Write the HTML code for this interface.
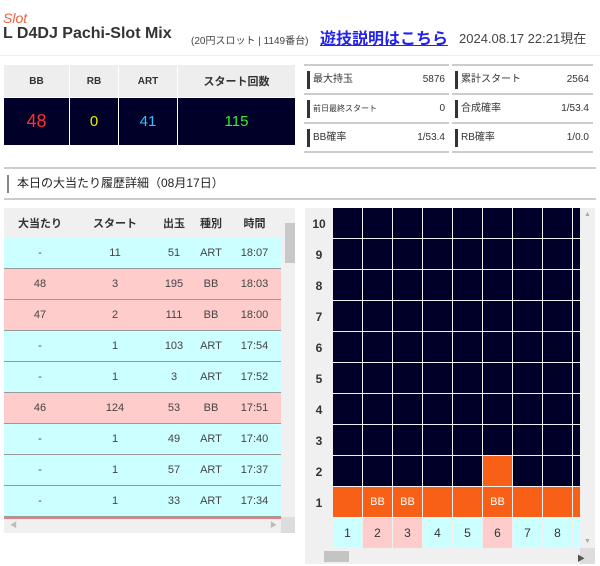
<!DOCTYPE html><html><head><meta charset="utf-8"><style>
*{margin:0;padding:0;box-sizing:border-box}
body{width:600px;height:566px;background:#fff;font-family:"Liberation Sans","Noto Sans CJK JP",sans-serif;color:#333;position:relative;overflow:hidden}
.a{position:absolute}
.c{display:flex;align-items:center;justify-content:center}
.r{height:29px;border-bottom:2px solid #ccc;position:relative;font-size:10px;line-height:12px}
.r span{position:absolute;top:8px;line-height:12px}
</style></head><body>
<div class="a" style="left:3px;top:10px;font-size:14px;font-style:italic;color:#f06040">Slot</div>
<div class="a" style="left:3px;top:25px;font-size:16px;font-weight:bold;color:#333;white-space:nowrap">L D4DJ Pachi-Slot Mix</div>
<div class="a" style="left:191px;top:32px;font-size:10px;color:#444;white-space:nowrap">(20円スロット | 1149番台)</div>
<div class="a" style="left:320px;top:25px;font-size:16px;font-weight:bold;color:#2222ee;text-decoration:underline;white-space:nowrap">遊技説明はこちら</div>
<div class="a" style="left:459px;top:28px;font-size:13px;color:#444;white-space:nowrap">2024.08.17 22:21現在</div>
<div class="a" style="left:0;top:55px;width:600px;height:1px;background:#eee"></div>

<div class="a" style="left:4px;top:65px;width:291px;height:80px;background:#fff">
<div class="a c" style="left:0;top:0;width:65px;height:32px;background:#eee;font-size:10px;font-weight:bold">BB</div>
<div class="a c" style="left:66px;top:0;width:48px;height:32px;background:#eee;font-size:10px;font-weight:bold">RB</div>
<div class="a c" style="left:115px;top:0;width:58px;height:32px;background:#eee;font-size:10px;font-weight:bold">ART</div>
<div class="a c" style="left:174px;top:0;width:117px;height:32px;background:#eee;font-size:11px;font-weight:bold">スタート回数</div>
<div class="a c" style="left:0;top:33px;width:65px;height:47px;background:#000028;font-size:18px;color:#ff3030">48</div>
<div class="a c" style="left:66px;top:33px;width:48px;height:47px;background:#000028;font-size:15px;color:#eeee00">0</div>
<div class="a c" style="left:115px;top:33px;width:58px;height:47px;background:#000028;font-size:15px;color:#30c0ff">41</div>
<div class="a c" style="left:174px;top:33px;width:117px;height:47px;background:#000028;font-size:15px;color:#30f030">115</div>
</div>

<div class="a" style="left:304px;top:64px;width:145px;height:110px;border-top:2px solid #ccc">
<div class="r"><div class="a" style="left:3px;top:5px;width:3px;height:18px;background:#333"></div><span style="left:9px">最大持玉</span><span style="right:4px">5876</span></div>
<div class="r"><div class="a" style="left:3px;top:5px;width:3px;height:18px;background:#333"></div><span style="left:9px;font-size:8px">前日最終スタート</span><span style="right:4px">0</span></div>
<div class="r"><div class="a" style="left:3px;top:5px;width:3px;height:18px;background:#333"></div><span style="left:9px">BB確率</span><span style="right:4px">1/53.4</span></div>
</div>
<div class="a" style="left:452px;top:64px;width:141px;height:110px;border-top:2px solid #ccc">
<div class="r"><div class="a" style="left:3px;top:5px;width:3px;height:18px;background:#333"></div><span style="left:9px">累計スタート</span><span style="right:4px">2564</span></div>
<div class="r"><div class="a" style="left:3px;top:5px;width:3px;height:18px;background:#333"></div><span style="left:9px">合成確率</span><span style="right:4px">1/53.4</span></div>
<div class="r"><div class="a" style="left:3px;top:5px;width:3px;height:18px;background:#333"></div><span style="left:9px">RB確率</span><span style="right:4px">1/0.0</span></div>
</div>

<div class="a" style="left:4px;top:167px;width:592px;height:33px;border-top:2px solid #ccc;border-bottom:2px solid #ccc">
<div class="a" style="left:3px;top:6px;width:2px;height:18px;background:#888"></div>
<span class="a" style="left:13px;top:7px;font-size:12px;line-height:14px;color:#222">本日の大当たり履歴詳細（08月17日）</span></div>

<div class="a" style="left:4px;top:208px;width:291px;height:325px;background:#f0f0f0;overflow:hidden;font-size:11px">
<div style="position:absolute;left:0;top:0;width:277px">
<div style="display:flex;height:30px;align-items:center;font-weight:bold;color:#333;font-size:11px"><span style="width:72px;text-align:center">大当たり</span><span style="width:78px;text-align:center">スタート</span><span style="width:40px;text-align:center">出玉</span><span style="width:34px;text-align:center">種別</span><span style="width:53px;text-align:center">時間</span></div>
<div id="rows"></div>
<div style="height:2px;background:#e08080"></div>
</div>
<div class="a" style="left:281px;top:15px;width:10px;height:40px;background:#c8c8c8"></div>
<div class="a" style="left:277px;top:309px;width:14px;height:16px;background:#ddd"></div>
<div class="a" style="left:6px;top:312px;font-size:7px;color:#bbb">◀</div>
<div class="a" style="left:266px;top:312px;font-size:7px;color:#bbb">▶</div>
</div>

<div class="a" style="left:305px;top:208px;width:290px;height:356px;background:#f0f0f0;overflow:hidden">
<div id="grid"></div>
<div class="a" style="left:275px;top:340px;width:15px;height:16px;background:#ddd"></div>
<div class="a" style="left:19px;top:343px;width:25px;height:11px;background:#c4c4c4"></div>
<div class="a" style="left:272px;top:345px;font-size:8px;color:#555">▶</div>
<div class="a" style="left:279px;top:3px;font-size:7px;color:#aaa">▲</div>
<div class="a" style="left:279px;top:330px;font-size:7px;color:#aaa">▼</div>
</div>
<script>
var d=[["-","11","51","ART","18:07",0],["48","3","195","BB","18:03",1],["47","2","111","BB","18:00",1],["-","1","103","ART","17:54",0],["-","1","3","ART","17:52",0],["46","124","53","BB","17:51",1],["-","1","49","ART","17:40",0],["-","1","57","ART","17:37",0],["-","1","33","ART","17:34",0]];
var h="";d.forEach(function(r){h+='<div style="display:flex;height:31px;align-items:center;border-bottom:1px solid #999;color:#444;background:'+(r[5]?'#ffcccc':'#ccffff')+'"><span style="width:72px;text-align:center">'+r[0]+'</span><span style="width:78px;text-align:center">'+r[1]+'</span><span style="width:40px;text-align:center">'+r[2]+'</span><span style="width:34px;text-align:center">'+r[3]+'</span><span style="width:53px;text-align:center">'+r[4]+'</span></div>';});
document.getElementById("rows").innerHTML=h;
var g="";var W=30,H=31,X=28;
for(var i=0;i<10;i++){var y=i*H;var n=10-i;
g+='<div class="a c" style="left:0;top:'+y+'px;width:28px;height:'+H+'px;font-size:12px;font-weight:bold;color:#333">'+n+'</div>';
for(var j=0;j<9;j++){var col="#000028",t="";
if(n==1){col="#f86018";if(j==1||j==2||j==5)t="BB";}
if(n==2&&j==5)col="#f86018";
g+='<div class="a c" style="left:'+(X+j*W)+'px;top:'+y+'px;width:'+(W-1)+'px;height:'+(H-1)+'px;background:'+col+';color:#fff;font-size:11px">'+t+'</div>';}}
for(var j=0;j<9;j++){var p=(j==1||j==2||j==5);g+='<div class="a c" style="left:'+(X+j*W)+'px;top:310px;width:'+(W-1)+'px;height:30px;background:'+(p?'#ffcccc':'#ccffff')+';font-size:12px;color:#333">'+(j+1)+'</div>';}
g+='<div class="a" style="left:275px;top:0;width:15px;height:340px;background:#f0f0f0"></div>';
document.getElementById("grid").innerHTML=g;
</script>
</body></html>
